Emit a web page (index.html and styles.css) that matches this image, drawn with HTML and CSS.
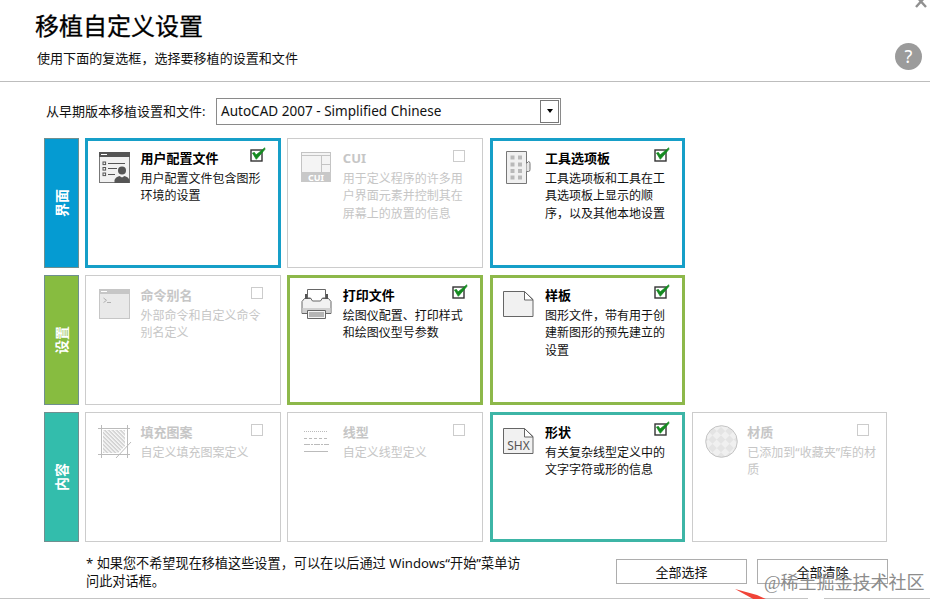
FILE: index.html
```
<!DOCTYPE html>
<html lang="zh-CN">
<head>
    <meta charset="UTF-8">
    <meta name="viewport" content="width=device-width, initial-scale=1.0">
    <title>移植自定义设置</title>
    <link rel="stylesheet" href="styles.css">
</head>
<body>

    <!-- Shared checkbox shapes -->
    <svg class="symbols" width="0" height="0">
        <symbol id="box-on" viewBox="0 0 16 15"><rect x="1" y="3" width="11" height="11" fill="#fff" stroke="#333" stroke-width="1.4"/><path d="M2.5 6L4.5 5.5 6 8 14.8 .8 14.8 2.5 6.3 12.3z" fill="#148a20" stroke="#148a20" stroke-width=".8"/></symbol>
        <symbol id="box-off" viewBox="0 0 16 15"><rect x="1.5" y="3.5" width="11" height="11" fill="#fff" stroke="#ccc"/></symbol>
    </svg>

    <!-- Dialog Header -->
    <header class="dialog-header">
        <div class="heading">
            <h1>移植自定义设置</h1>
            <p>使用下面的复选框，选择要移植的设置和文件</p>
        </div>
        <svg class="close-icon" width="14" height="14" viewBox="0 0 14 14"><path d="M2 0 L12 11 M12 0 L2 11" stroke="#909090" stroke-width="2.4" fill="none"/></svg>
        <div class="help-icon">?</div>
    </header>

    <main>
        <!-- Version Selection -->
        <div class="version-row">
            <span class="version-label">从早期版本移植设置和文件:</span>
            <div class="select-box">
                <span class="select-value">AutoCAD 2007 - Simplified Chinese</span>
                <span class="select-arrow"></span>
            </div>
        </div>

        <!-- Category Rows -->
        <div class="category-row blue">
            <div class="tab"><span>界面</span></div>
            <div class="card selected">
                <svg class="icon" width="34" height="34" viewBox="0 0 34 34">
                    <rect x="1.5" y="1.5" width="30" height="30" fill="#f1f1f1" stroke="#777"/>
                    <path d="M1 1h31v5H1z" fill="#555"/><path d="M3 3.5h6" stroke="#fff"/>
                    <g fill="none" stroke="#555"><rect x="5" y="11" width="2.6" height="2.6"/><rect x="5" y="16.5" width="2.6" height="2.6"/><rect x="5" y="22" width="2.6" height="2.6"/><path d="M10 12.5h17M10 17.5h9M10 23.5h7"/></g>
                    <circle cx="24" cy="19.5" r="4" fill="#555"/>
                    <path d="M16.5 32v-3q1-3 5-4l2.5 1.5 2.5-1.5q4 1 5 4v3z" fill="#555"/>
                </svg>
                <div class="card-text">
                    <h2>用户配置文件</h2>
                    <p>用户配置文件包含图形<br>环境的设置</p>
                </div>
                <svg class="check" width="16" height="15"><use href="#box-on"/></svg>
            </div>
            <div class="card">
                <svg class="icon" width="34" height="34" viewBox="0 0 34 34">
                    <rect x="1.5" y="1.5" width="29" height="29" fill="#f4f4f4" stroke="#c4c4c4"/>
                    <path d="M1 4.5h30M21.5 4.5v17M21.5 13.5h9" stroke="#c4c4c4" fill="none"/>
                    <path d="M1 21h30v10H1z" fill="#c8c8c8"/>
                    <text x="16" y="29.5" text-anchor="middle" class="cui-text">CUI</text>
                </svg>
                <div class="card-text">
                    <h2>CUI</h2>
                    <p>用于定义程序的许多用<br>户界面元素并控制其在<br>屏幕上的放置的信息</p>
                </div>
                <svg class="check" width="16" height="15"><use href="#box-off"/></svg>
            </div>
            <div class="card selected">
                <svg class="icon" width="34" height="34" viewBox="0 0 34 34">
                    <path d="M3.5 .5h20v32h-20z" fill="#f0f0f0" stroke="#777"/>
                    <path d="M23.5 12.5l2-2q1.500 0 1.500 2v6q0 2-1.500 2h-2" fill="#e8e8e8" stroke="#777"/>
                    <path d="M7.500 4.500h4v4h-4zM15 4.500h4v4h-4zM7.500 11.500h4v4h-4zM15 11.500h4v4h-4zM7.500 18h4v4h-4zM15 18h4v4h-4zM7.500 24.500h4v4h-4zM15 24.500h4v4h-4z" fill="#b9b9b9"/>
                </svg>
                <div class="card-text">
                    <h2>工具选项板</h2>
                    <p>工具选项板和工具在工<br>具选项板上显示的顺<br>序，以及其他本地设置</p>
                </div>
                <svg class="check" width="16" height="15"><use href="#box-on"/></svg>
            </div>
        </div>

        <div class="category-row green">
            <div class="tab"><span>设置</span></div>
            <div class="card">
                <svg class="icon" width="34" height="34" viewBox="0 0 34 34">
                    <rect x="1.5" y="1.5" width="30" height="29" fill="#e9e9e9" stroke="#c6c6c6"/>
                    <path d="M1 1h31v5H1z" fill="#c6c6c6"/><path d="M3 3.5h6" stroke="#fff"/>
                    <path d="M5.5 10l3 2.3-3 2.3M9 14.500h4" stroke="#b0b0b0" fill="none"/>
                </svg>
                <div class="card-text">
                    <h2>命令别名</h2>
                    <p>外部命令和自定义命令<br>别名定义</p>
                </div>
                <svg class="check" width="16" height="15"><use href="#box-off"/></svg>
            </div>
            <div class="card selected">
                <svg class="icon" width="34" height="34" viewBox="0 0 34 34">
                    <path d="M4.500 10.500h24l2.500 3v12h-29v-12z" fill="#f1f1f1" stroke="#666"/>
                    <path d="M2.500 20h28v5h-28z" fill="#d0d0d0"/>
                    <path d="M5 6h3v5H5zM25 6h3v5h-3z" fill="#555"/>
                    <path d="M7.500 1.500h18v8.500h-3l-2 3h-8l-2-3h-3z" fill="#fff" stroke="#666"/>
                    <path d="M7.500 22.500h18v8h-18z" fill="#f4f4f4" stroke="#666"/><path d="M9 24h15v5H9z" fill="#b5b5b5"/>
                </svg>
                <div class="card-text">
                    <h2>打印文件</h2>
                    <p>绘图仪配置、打印样式<br>和绘图仪型号参数</p>
                </div>
                <svg class="check" width="16" height="15"><use href="#box-on"/></svg>
            </div>
            <div class="card selected">
                <svg class="icon" width="34" height="34" viewBox="0 0 34 34">
                    <path d="M.5 3.500h21l8.500 8v17H.5z" fill="#f1f1f1" stroke="#666"/><path d="M21.500 3.500v8.500h8.500z" fill="#fff" stroke="#666"/>
                </svg>
                <div class="card-text">
                    <h2>样板</h2>
                    <p>图形文件，带有用于创<br>建新图形的预先建立的<br>设置</p>
                </div>
                <svg class="check" width="16" height="15"><use href="#box-on"/></svg>
            </div>
        </div>

        <div class="category-row teal">
            <div class="tab"><span>内容</span></div>
            <div class="card">
                <svg class="icon" width="34" height="34" viewBox="0 0 34 34">
                    <defs><pattern id="hatch" width="2.8" height="2.8" patternUnits="userSpaceOnUse" patternTransform="rotate(-45)"><path d="M1 0v3" stroke="#aaa" stroke-width=".9"/></pattern></defs>
                    <path d="M5 5h22v16l-7 7H5z" fill="url(#hatch)"/>
                    <path d="M0 3.5h32M0 29.5h32M3.5 0v33M29.5 0v33M18 33L33 17" stroke="#bbb" fill="none"/>
                </svg>
                <div class="card-text">
                    <h2>填充图案</h2>
                    <p>自定义填充图案定义</p>
                </div>
                <svg class="check" width="16" height="15"><use href="#box-off"/></svg>
            </div>
            <div class="card">
                <svg class="icon" width="34" height="34" viewBox="0 0 34 34">
                    <g stroke="#bbb"><path d="M4 6.5h24" stroke-dasharray="1 1"/><path d="M4 13.5h25" stroke-dasharray="3 2"/><path d="M4 19.5h25" stroke-dasharray="6 1 2 1"/><path d="M4 26.5h24"/></g>
                </svg>
                <div class="card-text">
                    <h2>线型</h2>
                    <p>自定义线型定义</p>
                </div>
                <svg class="check" width="16" height="15"><use href="#box-off"/></svg>
            </div>
            <div class="card selected">
                <svg class="icon" width="34" height="34" viewBox="0 0 34 34">
                    <path d="M.5 3.5h21l8.5 8v17H.5z" fill="#f1f1f1" stroke="#666"/><path d="M21.5 3.5v8.5h8.5z" fill="#fff" stroke="#666"/>
                    <text x="15.5" y="25" text-anchor="middle" class="shx-text">SHX</text>
                </svg>
                <div class="card-text">
                    <h2>形状</h2>
                    <p>有关复杂线型定义中的<br>文字字符或形的信息</p>
                </div>
                <svg class="check" width="16" height="15"><use href="#box-on"/></svg>
            </div>
            <div class="card">
                <svg class="icon" width="34" height="34" viewBox="0 0 34 34">
                    <defs><pattern id="checker" width="12" height="12" patternUnits="userSpaceOnUse" patternTransform="rotate(45 16 16)"><path d="M0 0h12v12H0z" fill="#f0f0f0"/><path d="M0 0h6v6H0zM6 6h6v6H6z" fill="#e4e4e4"/></pattern></defs>
                    <circle cx="16.5" cy="16.5" r="15.8" fill="url(#checker)" stroke="#c4c4c4"/>
                </svg>
                <div class="card-text">
                    <h2>材质</h2>
                    <p>已添加到“收藏夹”库的材<br>质</p>
                </div>
                <svg class="check" width="16" height="15"><use href="#box-off"/></svg>
            </div>
        </div>

        <!-- Note and Buttons -->
        <div class="bottom-row">
            <p class="note">* 如果您不希望现在移植这些设置，可以在以后通过 Windows“开始”菜单访<br>问此对话框。</p>
            <button type="button">全部选择</button>
            <button type="button">全部清除</button>
        </div>
    </main>

    <div class="bottom-line"></div>
    <svg class="red-arrow" width="36" height="12" viewBox="0 0 36 12"><path d="M0 1L22 7 33 12H20z" fill="#f04438"/></svg>
    <div class="watermark">@稀土掘金技术社区</div>

</body>
</html>
```
FILE: styles.css
```
/* General Styling */
* {
    box-sizing: border-box;
}

body {
    position: relative;
    width: 930px;
    height: 599px;
    margin: 0;
    overflow: hidden;
    background-color: #fff;
    color: #111;
    font-family: "Noto Sans", "Noto Sans CJK SC", sans-serif;
    font-size: 13px;
}

h1, h2, p {
    margin: 0;
    font-weight: normal;
    white-space: nowrap;
}

.symbols {
    display: none;
}

/* Header */
.dialog-header {
    position: relative;
    height: 82px;
    padding: 8px 0 0 35px;
    border-bottom: 1px solid #bdbdbd;
}

h1 {
    color: #000;
    font-size: 24px;
    line-height: 36px;
    -webkit-text-stroke: 0.3px #000;
}

.heading p {
    padding-left: 2px;
    margin-top: 4px;
    font-size: 13.05px;
    line-height: 20px;
}

.close-icon {
    position: absolute;
    top: -4px;
    right: 2px;
}

.help-icon {
    position: absolute;
    top: 43px;
    right: 8px;
    width: 27px;
    height: 27px;
    border-radius: 50%;
    background-color: #9b9b9b;
    color: #fff;
    font-size: 18px;
    line-height: 27px;
    text-align: center;
}

/* Version Selection */
main {
    padding: 15px 0 0 44px;
}

.version-row {
    display: flex;
    align-items: center;
    height: 28px;
    margin-bottom: 13px;
}

.version-label {
    width: 172px;
    padding: 0 0 2px 2px;
    white-space: nowrap;
}

.select-box {
    display: flex;
    justify-content: space-between;
    align-items: center;
    width: 345px;
    height: 27px;
    padding: 1px 1px 1px 4px;
    border: 1px solid #8a8a8a;
}

.select-value {
    font-size: 13.55px;
    white-space: nowrap;
}

.select-arrow {
    display: flex;
    justify-content: center;
    align-items: center;
    width: 19px;
    height: 23px;
    border: 1px solid #777;
}

.select-arrow::before {
    content: "";
    border: 3.5px solid transparent;
    border-top: 4px solid #000;
    border-bottom: 0;
}

/* Category Rows */
.category-row {
    display: flex;
    gap: 6.75px;
    height: 130px;
    margin-bottom: 7px;
}

.blue {
    --accent: #059bd2;
    --edge: #169fc8;
}

.green {
    --accent: #87bc40;
    --edge: #8db84a;
}

.teal {
    --accent: #33bdac;
    --edge: #3db5a6;
}

.tab {
    display: flex;
    justify-content: center;
    align-items: center;
    width: 35px;
    margin-right: -0.75px;
    padding-right: 2px;
    border: 1px solid #6f8f8f;
    background-color: var(--accent);
    color: #fff;
    font-size: 14px;
    font-weight: bold;
}

.tab span {
    transform: rotate(-90deg);
    white-space: nowrap;
}

.card {
    display: flex;
    position: relative;
    width: 195.5px;
    padding: 11px 0 0 12px;
    border: 1px solid #ccc;
    color: #c6c6c6;
}

.card.selected {
    padding: 9px 0 0 10px;
    border: 3px solid var(--edge);
    color: #111;
}

.icon {
    margin-top: 1px;
    flex-shrink: 0;
}

.card-text {
    margin: -1px 0 0 8.6px;
}

.card h2 {
    font-size: 13px;
    font-weight: bold;
    line-height: 18px;
}

.card.selected h2 {
    color: #000;
}

.card p {
    margin-top: 3px;
    font-size: 12px;
    line-height: 17.3px;
}

.check {
    position: absolute;
    top: 8px;
    right: 14px;
}

.card.selected .check {
    top: 6px;
    right: 12px;
}

.cui-text {
    fill: #fff;
    font: bold 9px "Noto Sans", sans-serif;
}

.shx-text {
    fill: #555;
    font: 12px "Noto Sans", sans-serif;
}

/* Note and Buttons */
.bottom-row {
    display: flex;
    padding: 5px 0 0 42px;
}

.note {
    width: 530px;
    font-size: 13.15px;
    line-height: 18px;
}

button {
    width: 131px;
    height: 25px;
    margin: 5px 10px 0 0;
    padding: 0;
    border: 1px solid #adadad;
    background-color: #fff;
    color: #111;
    font-family: inherit;
    font-size: 13px;
}

/* Bottom edge with overlays */
.bottom-line {
    position: absolute;
    top: 598px;
    left: 0;
    width: 100%;
    height: 1px;
    background: linear-gradient(90deg, #c4c4c4 808px, #fff 808px, #fff 824px, #c4c4c4 824px);
}

.red-arrow {
    position: absolute;
    top: 588px;
    left: 735px;
}

.watermark {
    position: absolute;
    top: 570px;
    left: 764px;
    color: #8c8c8c;
    font-family: "Liberation Serif", "Noto Sans CJK SC", serif;
    font-size: 18px;
    line-height: 26px;
    white-space: nowrap;
}
```
